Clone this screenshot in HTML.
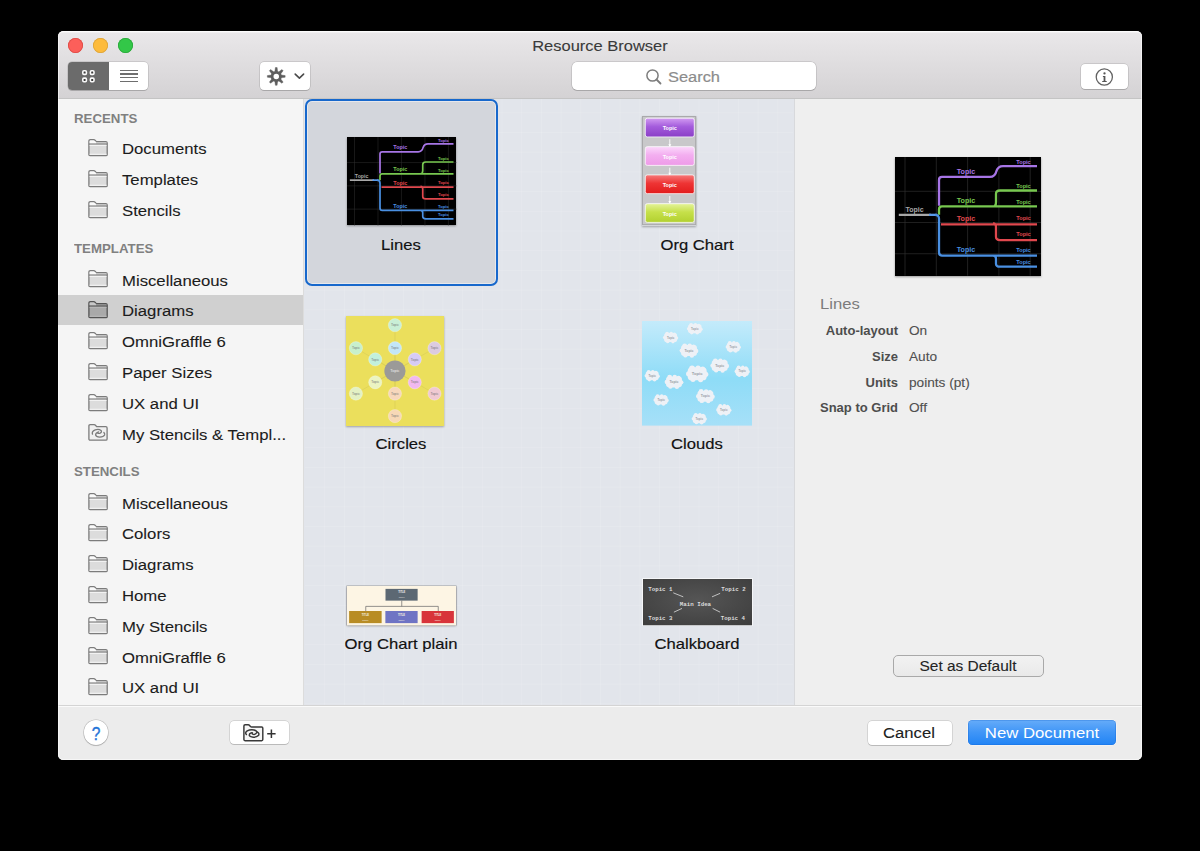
<!DOCTYPE html>
<html><head><meta charset="utf-8"><style>
html,body{margin:0;padding:0;width:1200px;height:851px;background:#000;overflow:hidden;font-family:"Liberation Sans",sans-serif;}
.a{position:absolute;}
.t{position:absolute;line-height:1;white-space:nowrap;}
#win{position:absolute;left:58px;top:31px;width:1084px;height:729px;border-radius:5.5px;overflow:hidden;background:#ececec;}
#bar{position:absolute;left:0;top:0;width:1084px;height:68px;background:linear-gradient(#eae8ea,#d4d2d4);border-bottom:1px solid #c4c4c4;box-sizing:border-box;box-shadow:inset 0 1.5px 0 rgba(255,255,255,0.7);}
#side{position:absolute;left:0;top:68px;width:246px;height:606px;background:#f5f5f5;border-right:1px solid #dcdcdc;box-sizing:border-box;}
#grid{position:absolute;left:246px;top:68px;width:490px;height:606px;background:#e2e5eb;}
#info{position:absolute;left:735.5px;top:68px;width:348.5px;height:606px;background:#efefef;border-left:1.5px solid #d8d9dc;box-sizing:border-box;}
#foot{position:absolute;left:0;top:674px;width:1084px;height:55px;background:#ececec;border-top:1px solid #d4d4d4;box-sizing:border-box;box-shadow:inset 0 1px 0 rgba(255,255,255,0.75);}
.btn{position:absolute;background:#fff;border-radius:4px;box-sizing:border-box;box-shadow:0 0 0 0.5px rgba(0,0,0,0.2),0 1px 0.5px rgba(0,0,0,0.12);}
svg{position:absolute;overflow:visible;}
</style></head><body>
<div id="win"><div id="bar"></div><div id="side"></div><div id="grid"></div><div id="info"></div><div id="foot"></div><div class="a" style="left:0;top:0;width:1084px;height:729px;box-sizing:border-box;border:1px solid rgba(255,255,255,0.55);border-radius:5.5px;"></div></div>
<div class="a" style="left:68.30px;top:37.5px;width:15px;height:15px;border-radius:50%;background:#fc5f5a;box-shadow:inset 0 0 0 0.8px #dc4a45;"></div>
<div class="a" style="left:93.00px;top:37.5px;width:15px;height:15px;border-radius:50%;background:#fdbb3c;box-shadow:inset 0 0 0 0.8px #dba33a;"></div>
<div class="a" style="left:117.60px;top:37.5px;width:15px;height:15px;border-radius:50%;background:#33c748;box-shadow:inset 0 0 0 0.8px #2aa83a;"></div>
<div class="t" style="left:450.00px;width:300px;text-align:center;top:38.00px;font-size:16px;color:#3a3a3a;transform:scale(1.03,0.92);transform-origin:50% 13.60px;-webkit-text-stroke:0.1px currentColor;">Resource Browser</div>
<div class="btn" style="left:68px;top:62px;width:80px;height:28px;"></div>
<div class="a" style="left:68px;top:62px;width:41px;height:28px;background:#6b6b6b;border-radius:4px 0 0 4px;"></div>
<svg style="left:0;top:0" width="1200" height="851"><rect x="82.80" y="70.80" width="3.6" height="3.6" rx="1.1" fill="#3a3a3a" stroke="#fafafa" stroke-width="1.6"/><rect x="82.80" y="78.10" width="3.6" height="3.6" rx="1.1" fill="#3a3a3a" stroke="#fafafa" stroke-width="1.6"/><rect x="90.40" y="70.80" width="3.6" height="3.6" rx="1.1" fill="#3a3a3a" stroke="#fafafa" stroke-width="1.6"/><rect x="90.40" y="78.10" width="3.6" height="3.6" rx="1.1" fill="#3a3a3a" stroke="#fafafa" stroke-width="1.6"/></svg>
<div class="a" style="left:120.1px;top:69.65px;width:17.6px;height:1.3px;background:#6e6e6e;"></div>
<div class="a" style="left:120.1px;top:73.40px;width:17.6px;height:1.3px;background:#6e6e6e;"></div>
<div class="a" style="left:120.1px;top:77.15px;width:17.6px;height:1.3px;background:#6e6e6e;"></div>
<div class="a" style="left:120.1px;top:80.90px;width:17.6px;height:1.3px;background:#6e6e6e;"></div>
<div class="btn" style="left:260px;top:62px;width:50px;height:28px;"></div>
<svg style="left:0;top:0" width="1200" height="851"><path d="M280.85 77.85 L285.15 77.25 L285.15 75.55 L280.85 74.95 Z" fill="#5e5e5e" stroke="#5e5e5e" stroke-width="0.4" stroke-linejoin="round"/><path d="M278.48 80.68 L281.94 83.29 L283.14 82.09 L280.53 78.63 Z" fill="#5e5e5e" stroke="#5e5e5e" stroke-width="0.4" stroke-linejoin="round"/><path d="M274.80 81.00 L275.40 85.30 L277.10 85.30 L277.70 81.00 Z" fill="#5e5e5e" stroke="#5e5e5e" stroke-width="0.4" stroke-linejoin="round"/><path d="M271.97 78.63 L269.36 82.09 L270.56 83.29 L274.02 80.68 Z" fill="#5e5e5e" stroke="#5e5e5e" stroke-width="0.4" stroke-linejoin="round"/><path d="M271.65 74.95 L267.35 75.55 L267.35 77.25 L271.65 77.85 Z" fill="#5e5e5e" stroke="#5e5e5e" stroke-width="0.4" stroke-linejoin="round"/><path d="M274.02 72.12 L270.56 69.51 L269.36 70.71 L271.97 74.17 Z" fill="#5e5e5e" stroke="#5e5e5e" stroke-width="0.4" stroke-linejoin="round"/><path d="M277.70 71.80 L277.10 67.50 L275.40 67.50 L274.80 71.80 Z" fill="#5e5e5e" stroke="#5e5e5e" stroke-width="0.4" stroke-linejoin="round"/><path d="M280.53 74.17 L283.14 70.71 L281.94 69.51 L278.48 72.12 Z" fill="#5e5e5e" stroke="#5e5e5e" stroke-width="0.4" stroke-linejoin="round"/><circle cx="276.25" cy="76.4" r="4.1" fill="none" stroke="#5e5e5e" stroke-width="2.7"/><path d="M295.2 74.1 L299.4 78.1 L303.6 74.1" fill="none" stroke="#4a4a4a" stroke-width="1.6" stroke-linecap="round" stroke-linejoin="round"/></svg>
<div class="btn" style="left:572px;top:62px;width:244px;height:28px;border-radius:5px;"></div>
<svg style="left:0;top:0" width="1200" height="851"><circle cx="652.5" cy="75.5" r="5.6" fill="none" stroke="#7d7d7d" stroke-width="1.5"/><line x1="656.5" y1="79.5" x2="660.5" y2="83.5" stroke="#7d7d7d" stroke-width="1.8" stroke-linecap="round"/></svg>
<div class="t" style="left:667.50px;top:68.60px;font-size:16px;color:#8c8c8c;transform:scale(1.025,0.96);transform-origin:0 13.60px;-webkit-text-stroke:0.2px currentColor;">Search</div>
<div class="btn" style="left:1081px;top:64px;width:47px;height:25px;"></div>
<svg style="left:0;top:0" width="1200" height="851"><circle cx="1104.3" cy="77" r="8.1" fill="none" stroke="#606060" stroke-width="1.25"/><circle cx="1104.5" cy="73.4" r="1.15" fill="#555"/><path d="M1102.9 76.1 H1105.4 V81.0 H1106.7 V82.0 H1102.2 V81.0 H1103.6 V77.0 H1102.9 Z" fill="#555"/></svg>
<div class="a" style="left:58px;top:294.5px;width:245px;height:30.5px;background:#d0d0d0;"></div>
<div class="t" style="left:74.00px;top:111.55px;font-size:13px;color:#808080;font-weight:bold;transform:scale(1.02,1.0);transform-origin:0 11.05px;">RECENTS</div>
<div class="t" style="left:74.00px;top:242.25px;font-size:13px;color:#808080;font-weight:bold;transform:scale(1.02,1.0);transform-origin:0 11.05px;">TEMPLATES</div>
<div class="t" style="left:74.00px;top:465.45px;font-size:13px;color:#808080;font-weight:bold;transform:scale(1.02,1.0);transform-origin:0 11.05px;">STENCILS</div>
<svg style="left:88px;top:139.10px" width="20" height="17" viewBox="0 0 20 17"><path d="M0.9 15.4 V2.2 Q0.9 0.7 2.4 0.7 H5.6 Q6.6 0.7 7.3 1.5 L7.8 2.1 Q8.2 2.6 9.0 2.6 H17.8 Q19.2 2.6 19.2 4.0 V15.4 Q19.2 16.6 18.0 16.6 H2.1 Q0.9 16.6 0.9 15.4 Z" fill="#dcdcdc" stroke="#7c7c7c" stroke-width="1.3"/><path d="M1.6 2.3 Q1.8 1.4 2.6 1.4 H5.5 Q6.3 1.4 6.9 2.1 L8.1 3.3 V4.5 H1.6 Z" fill="#fafafa"/><rect x="8.1" y="3.3" width="10.4" height="1.3" fill="#c6c6c6"/><line x1="0.9" y1="5.1" x2="19.2" y2="5.1" stroke="#7c7c7c" stroke-width="1.2"/><rect x="1.6" y="5.8" width="16.9" height="1.2" fill="#f2f2f2"/><rect x="1.6" y="14.7" width="16.9" height="1.2" fill="#f2f2f2"/></svg>
<div class="t" style="left:122.20px;top:141.30px;font-size:16px;color:#1c1c1c;transform:scale(1.045,0.9);transform-origin:0 13.60px;-webkit-text-stroke:0.1px currentColor;">Documents</div>
<svg style="left:88px;top:169.90px" width="20" height="17" viewBox="0 0 20 17"><path d="M0.9 15.4 V2.2 Q0.9 0.7 2.4 0.7 H5.6 Q6.6 0.7 7.3 1.5 L7.8 2.1 Q8.2 2.6 9.0 2.6 H17.8 Q19.2 2.6 19.2 4.0 V15.4 Q19.2 16.6 18.0 16.6 H2.1 Q0.9 16.6 0.9 15.4 Z" fill="#dcdcdc" stroke="#7c7c7c" stroke-width="1.3"/><path d="M1.6 2.3 Q1.8 1.4 2.6 1.4 H5.5 Q6.3 1.4 6.9 2.1 L8.1 3.3 V4.5 H1.6 Z" fill="#fafafa"/><rect x="8.1" y="3.3" width="10.4" height="1.3" fill="#c6c6c6"/><line x1="0.9" y1="5.1" x2="19.2" y2="5.1" stroke="#7c7c7c" stroke-width="1.2"/><rect x="1.6" y="5.8" width="16.9" height="1.2" fill="#f2f2f2"/><rect x="1.6" y="14.7" width="16.9" height="1.2" fill="#f2f2f2"/></svg>
<div class="t" style="left:122.20px;top:172.10px;font-size:16px;color:#1c1c1c;transform:scale(1.045,0.9);transform-origin:0 13.60px;-webkit-text-stroke:0.1px currentColor;">Templates</div>
<svg style="left:88px;top:200.70px" width="20" height="17" viewBox="0 0 20 17"><path d="M0.9 15.4 V2.2 Q0.9 0.7 2.4 0.7 H5.6 Q6.6 0.7 7.3 1.5 L7.8 2.1 Q8.2 2.6 9.0 2.6 H17.8 Q19.2 2.6 19.2 4.0 V15.4 Q19.2 16.6 18.0 16.6 H2.1 Q0.9 16.6 0.9 15.4 Z" fill="#dcdcdc" stroke="#7c7c7c" stroke-width="1.3"/><path d="M1.6 2.3 Q1.8 1.4 2.6 1.4 H5.5 Q6.3 1.4 6.9 2.1 L8.1 3.3 V4.5 H1.6 Z" fill="#fafafa"/><rect x="8.1" y="3.3" width="10.4" height="1.3" fill="#c6c6c6"/><line x1="0.9" y1="5.1" x2="19.2" y2="5.1" stroke="#7c7c7c" stroke-width="1.2"/><rect x="1.6" y="5.8" width="16.9" height="1.2" fill="#f2f2f2"/><rect x="1.6" y="14.7" width="16.9" height="1.2" fill="#f2f2f2"/></svg>
<div class="t" style="left:122.20px;top:202.90px;font-size:16px;color:#1c1c1c;transform:scale(1.045,0.9);transform-origin:0 13.60px;-webkit-text-stroke:0.1px currentColor;">Stencils</div>
<svg style="left:88px;top:270.30px" width="20" height="17" viewBox="0 0 20 17"><path d="M0.9 15.4 V2.2 Q0.9 0.7 2.4 0.7 H5.6 Q6.6 0.7 7.3 1.5 L7.8 2.1 Q8.2 2.6 9.0 2.6 H17.8 Q19.2 2.6 19.2 4.0 V15.4 Q19.2 16.6 18.0 16.6 H2.1 Q0.9 16.6 0.9 15.4 Z" fill="#dcdcdc" stroke="#7c7c7c" stroke-width="1.3"/><path d="M1.6 2.3 Q1.8 1.4 2.6 1.4 H5.5 Q6.3 1.4 6.9 2.1 L8.1 3.3 V4.5 H1.6 Z" fill="#fafafa"/><rect x="8.1" y="3.3" width="10.4" height="1.3" fill="#c6c6c6"/><line x1="0.9" y1="5.1" x2="19.2" y2="5.1" stroke="#7c7c7c" stroke-width="1.2"/><rect x="1.6" y="5.8" width="16.9" height="1.2" fill="#f2f2f2"/><rect x="1.6" y="14.7" width="16.9" height="1.2" fill="#f2f2f2"/></svg>
<div class="t" style="left:122.20px;top:272.50px;font-size:16px;color:#1c1c1c;transform:scale(1.045,0.9);transform-origin:0 13.60px;-webkit-text-stroke:0.1px currentColor;">Miscellaneous</div>
<svg style="left:88px;top:301.10px" width="20" height="17" viewBox="0 0 20 17"><path d="M0.9 15.4 V2.2 Q0.9 0.7 2.4 0.7 H5.6 Q6.6 0.7 7.3 1.5 L7.8 2.1 Q8.2 2.6 9.0 2.6 H17.8 Q19.2 2.6 19.2 4.0 V15.4 Q19.2 16.6 18.0 16.6 H2.1 Q0.9 16.6 0.9 15.4 Z" fill="#a9a9a9" stroke="#555555" stroke-width="1.3"/><path d="M1.6 2.3 Q1.8 1.4 2.6 1.4 H5.5 Q6.3 1.4 6.9 2.1 L8.1 3.3 V4.5 H1.6 Z" fill="#c8c8c8"/><rect x="8.1" y="3.3" width="10.4" height="1.3" fill="#8e8e8e"/><line x1="0.9" y1="5.1" x2="19.2" y2="5.1" stroke="#555555" stroke-width="1.2"/><rect x="1.6" y="5.8" width="16.9" height="1.2" fill="#b6b6b6"/><rect x="1.6" y="14.7" width="16.9" height="1.2" fill="#b6b6b6"/></svg>
<div class="t" style="left:122.20px;top:303.30px;font-size:16px;color:#1c1c1c;transform:scale(1.045,0.9);transform-origin:0 13.60px;-webkit-text-stroke:0.1px currentColor;">Diagrams</div>
<svg style="left:88px;top:331.90px" width="20" height="17" viewBox="0 0 20 17"><path d="M0.9 15.4 V2.2 Q0.9 0.7 2.4 0.7 H5.6 Q6.6 0.7 7.3 1.5 L7.8 2.1 Q8.2 2.6 9.0 2.6 H17.8 Q19.2 2.6 19.2 4.0 V15.4 Q19.2 16.6 18.0 16.6 H2.1 Q0.9 16.6 0.9 15.4 Z" fill="#dcdcdc" stroke="#7c7c7c" stroke-width="1.3"/><path d="M1.6 2.3 Q1.8 1.4 2.6 1.4 H5.5 Q6.3 1.4 6.9 2.1 L8.1 3.3 V4.5 H1.6 Z" fill="#fafafa"/><rect x="8.1" y="3.3" width="10.4" height="1.3" fill="#c6c6c6"/><line x1="0.9" y1="5.1" x2="19.2" y2="5.1" stroke="#7c7c7c" stroke-width="1.2"/><rect x="1.6" y="5.8" width="16.9" height="1.2" fill="#f2f2f2"/><rect x="1.6" y="14.7" width="16.9" height="1.2" fill="#f2f2f2"/></svg>
<div class="t" style="left:122.20px;top:334.10px;font-size:16px;color:#1c1c1c;transform:scale(1.045,0.9);transform-origin:0 13.60px;-webkit-text-stroke:0.1px currentColor;">OmniGraffle 6</div>
<svg style="left:88px;top:362.70px" width="20" height="17" viewBox="0 0 20 17"><path d="M0.9 15.4 V2.2 Q0.9 0.7 2.4 0.7 H5.6 Q6.6 0.7 7.3 1.5 L7.8 2.1 Q8.2 2.6 9.0 2.6 H17.8 Q19.2 2.6 19.2 4.0 V15.4 Q19.2 16.6 18.0 16.6 H2.1 Q0.9 16.6 0.9 15.4 Z" fill="#dcdcdc" stroke="#7c7c7c" stroke-width="1.3"/><path d="M1.6 2.3 Q1.8 1.4 2.6 1.4 H5.5 Q6.3 1.4 6.9 2.1 L8.1 3.3 V4.5 H1.6 Z" fill="#fafafa"/><rect x="8.1" y="3.3" width="10.4" height="1.3" fill="#c6c6c6"/><line x1="0.9" y1="5.1" x2="19.2" y2="5.1" stroke="#7c7c7c" stroke-width="1.2"/><rect x="1.6" y="5.8" width="16.9" height="1.2" fill="#f2f2f2"/><rect x="1.6" y="14.7" width="16.9" height="1.2" fill="#f2f2f2"/></svg>
<div class="t" style="left:122.20px;top:364.90px;font-size:16px;color:#1c1c1c;transform:scale(1.045,0.9);transform-origin:0 13.60px;-webkit-text-stroke:0.1px currentColor;">Paper Sizes</div>
<svg style="left:88px;top:393.50px" width="20" height="17" viewBox="0 0 20 17"><path d="M0.9 15.4 V2.2 Q0.9 0.7 2.4 0.7 H5.6 Q6.6 0.7 7.3 1.5 L7.8 2.1 Q8.2 2.6 9.0 2.6 H17.8 Q19.2 2.6 19.2 4.0 V15.4 Q19.2 16.6 18.0 16.6 H2.1 Q0.9 16.6 0.9 15.4 Z" fill="#dcdcdc" stroke="#7c7c7c" stroke-width="1.3"/><path d="M1.6 2.3 Q1.8 1.4 2.6 1.4 H5.5 Q6.3 1.4 6.9 2.1 L8.1 3.3 V4.5 H1.6 Z" fill="#fafafa"/><rect x="8.1" y="3.3" width="10.4" height="1.3" fill="#c6c6c6"/><line x1="0.9" y1="5.1" x2="19.2" y2="5.1" stroke="#7c7c7c" stroke-width="1.2"/><rect x="1.6" y="5.8" width="16.9" height="1.2" fill="#f2f2f2"/><rect x="1.6" y="14.7" width="16.9" height="1.2" fill="#f2f2f2"/></svg>
<div class="t" style="left:122.20px;top:395.70px;font-size:16px;color:#1c1c1c;transform:scale(1.045,0.9);transform-origin:0 13.60px;-webkit-text-stroke:0.1px currentColor;">UX and UI</div>
<svg style="left:88px;top:424.30px" width="20" height="17" viewBox="0 0 20 17"><path d="M0.9 14.9 V2.0 Q0.9 0.7 2.2 0.7 H6.0 Q7.0 0.7 7.7 1.5 L8.2 2.1 Q8.6 2.7 9.4 2.7 H17.8 Q19.1 2.7 19.1 4.0 V14.9 Q19.1 16.2 17.8 16.2 H2.2 Q0.9 16.2 0.9 14.9 Z" fill="#f0f0f0" stroke="#7c7c7c" stroke-width="1.3"/><path d="M4.5 10.2 Q3.4 7.4 7.2 5.8 Q10.8 4.6 13.0 6.4 Q14.2 8.2 12.2 9.1 Q10.6 9.6 9.5 8.9" fill="none" stroke="#7c7c7c" stroke-width="1.3" stroke-linecap="round"/><path d="M10.6 7.8 Q7.6 8.8 7.6 11.0 Q8.2 13.0 11.6 13.1 Q15.6 13.0 16.6 11.0 Q17.0 9.6 15.9 8.5" fill="none" stroke="#7c7c7c" stroke-width="1.3" stroke-linecap="round"/></svg>
<div class="t" style="left:122.20px;top:426.50px;font-size:16px;color:#1c1c1c;transform:scale(1.045,0.9);transform-origin:0 13.60px;-webkit-text-stroke:0.1px currentColor;">My Stencils &amp; Templ...</div>
<svg style="left:88px;top:493.30px" width="20" height="17" viewBox="0 0 20 17"><path d="M0.9 15.4 V2.2 Q0.9 0.7 2.4 0.7 H5.6 Q6.6 0.7 7.3 1.5 L7.8 2.1 Q8.2 2.6 9.0 2.6 H17.8 Q19.2 2.6 19.2 4.0 V15.4 Q19.2 16.6 18.0 16.6 H2.1 Q0.9 16.6 0.9 15.4 Z" fill="#dcdcdc" stroke="#7c7c7c" stroke-width="1.3"/><path d="M1.6 2.3 Q1.8 1.4 2.6 1.4 H5.5 Q6.3 1.4 6.9 2.1 L8.1 3.3 V4.5 H1.6 Z" fill="#fafafa"/><rect x="8.1" y="3.3" width="10.4" height="1.3" fill="#c6c6c6"/><line x1="0.9" y1="5.1" x2="19.2" y2="5.1" stroke="#7c7c7c" stroke-width="1.2"/><rect x="1.6" y="5.8" width="16.9" height="1.2" fill="#f2f2f2"/><rect x="1.6" y="14.7" width="16.9" height="1.2" fill="#f2f2f2"/></svg>
<div class="t" style="left:122.20px;top:495.50px;font-size:16px;color:#1c1c1c;transform:scale(1.045,0.9);transform-origin:0 13.60px;-webkit-text-stroke:0.1px currentColor;">Miscellaneous</div>
<svg style="left:88px;top:524.10px" width="20" height="17" viewBox="0 0 20 17"><path d="M0.9 15.4 V2.2 Q0.9 0.7 2.4 0.7 H5.6 Q6.6 0.7 7.3 1.5 L7.8 2.1 Q8.2 2.6 9.0 2.6 H17.8 Q19.2 2.6 19.2 4.0 V15.4 Q19.2 16.6 18.0 16.6 H2.1 Q0.9 16.6 0.9 15.4 Z" fill="#dcdcdc" stroke="#7c7c7c" stroke-width="1.3"/><path d="M1.6 2.3 Q1.8 1.4 2.6 1.4 H5.5 Q6.3 1.4 6.9 2.1 L8.1 3.3 V4.5 H1.6 Z" fill="#fafafa"/><rect x="8.1" y="3.3" width="10.4" height="1.3" fill="#c6c6c6"/><line x1="0.9" y1="5.1" x2="19.2" y2="5.1" stroke="#7c7c7c" stroke-width="1.2"/><rect x="1.6" y="5.8" width="16.9" height="1.2" fill="#f2f2f2"/><rect x="1.6" y="14.7" width="16.9" height="1.2" fill="#f2f2f2"/></svg>
<div class="t" style="left:122.20px;top:526.30px;font-size:16px;color:#1c1c1c;transform:scale(1.045,0.9);transform-origin:0 13.60px;-webkit-text-stroke:0.1px currentColor;">Colors</div>
<svg style="left:88px;top:554.90px" width="20" height="17" viewBox="0 0 20 17"><path d="M0.9 15.4 V2.2 Q0.9 0.7 2.4 0.7 H5.6 Q6.6 0.7 7.3 1.5 L7.8 2.1 Q8.2 2.6 9.0 2.6 H17.8 Q19.2 2.6 19.2 4.0 V15.4 Q19.2 16.6 18.0 16.6 H2.1 Q0.9 16.6 0.9 15.4 Z" fill="#dcdcdc" stroke="#7c7c7c" stroke-width="1.3"/><path d="M1.6 2.3 Q1.8 1.4 2.6 1.4 H5.5 Q6.3 1.4 6.9 2.1 L8.1 3.3 V4.5 H1.6 Z" fill="#fafafa"/><rect x="8.1" y="3.3" width="10.4" height="1.3" fill="#c6c6c6"/><line x1="0.9" y1="5.1" x2="19.2" y2="5.1" stroke="#7c7c7c" stroke-width="1.2"/><rect x="1.6" y="5.8" width="16.9" height="1.2" fill="#f2f2f2"/><rect x="1.6" y="14.7" width="16.9" height="1.2" fill="#f2f2f2"/></svg>
<div class="t" style="left:122.20px;top:557.10px;font-size:16px;color:#1c1c1c;transform:scale(1.045,0.9);transform-origin:0 13.60px;-webkit-text-stroke:0.1px currentColor;">Diagrams</div>
<svg style="left:88px;top:585.70px" width="20" height="17" viewBox="0 0 20 17"><path d="M0.9 15.4 V2.2 Q0.9 0.7 2.4 0.7 H5.6 Q6.6 0.7 7.3 1.5 L7.8 2.1 Q8.2 2.6 9.0 2.6 H17.8 Q19.2 2.6 19.2 4.0 V15.4 Q19.2 16.6 18.0 16.6 H2.1 Q0.9 16.6 0.9 15.4 Z" fill="#dcdcdc" stroke="#7c7c7c" stroke-width="1.3"/><path d="M1.6 2.3 Q1.8 1.4 2.6 1.4 H5.5 Q6.3 1.4 6.9 2.1 L8.1 3.3 V4.5 H1.6 Z" fill="#fafafa"/><rect x="8.1" y="3.3" width="10.4" height="1.3" fill="#c6c6c6"/><line x1="0.9" y1="5.1" x2="19.2" y2="5.1" stroke="#7c7c7c" stroke-width="1.2"/><rect x="1.6" y="5.8" width="16.9" height="1.2" fill="#f2f2f2"/><rect x="1.6" y="14.7" width="16.9" height="1.2" fill="#f2f2f2"/></svg>
<div class="t" style="left:122.20px;top:587.90px;font-size:16px;color:#1c1c1c;transform:scale(1.045,0.9);transform-origin:0 13.60px;-webkit-text-stroke:0.1px currentColor;">Home</div>
<svg style="left:88px;top:616.50px" width="20" height="17" viewBox="0 0 20 17"><path d="M0.9 15.4 V2.2 Q0.9 0.7 2.4 0.7 H5.6 Q6.6 0.7 7.3 1.5 L7.8 2.1 Q8.2 2.6 9.0 2.6 H17.8 Q19.2 2.6 19.2 4.0 V15.4 Q19.2 16.6 18.0 16.6 H2.1 Q0.9 16.6 0.9 15.4 Z" fill="#dcdcdc" stroke="#7c7c7c" stroke-width="1.3"/><path d="M1.6 2.3 Q1.8 1.4 2.6 1.4 H5.5 Q6.3 1.4 6.9 2.1 L8.1 3.3 V4.5 H1.6 Z" fill="#fafafa"/><rect x="8.1" y="3.3" width="10.4" height="1.3" fill="#c6c6c6"/><line x1="0.9" y1="5.1" x2="19.2" y2="5.1" stroke="#7c7c7c" stroke-width="1.2"/><rect x="1.6" y="5.8" width="16.9" height="1.2" fill="#f2f2f2"/><rect x="1.6" y="14.7" width="16.9" height="1.2" fill="#f2f2f2"/></svg>
<div class="t" style="left:122.20px;top:618.70px;font-size:16px;color:#1c1c1c;transform:scale(1.045,0.9);transform-origin:0 13.60px;-webkit-text-stroke:0.1px currentColor;">My Stencils</div>
<svg style="left:88px;top:647.30px" width="20" height="17" viewBox="0 0 20 17"><path d="M0.9 15.4 V2.2 Q0.9 0.7 2.4 0.7 H5.6 Q6.6 0.7 7.3 1.5 L7.8 2.1 Q8.2 2.6 9.0 2.6 H17.8 Q19.2 2.6 19.2 4.0 V15.4 Q19.2 16.6 18.0 16.6 H2.1 Q0.9 16.6 0.9 15.4 Z" fill="#dcdcdc" stroke="#7c7c7c" stroke-width="1.3"/><path d="M1.6 2.3 Q1.8 1.4 2.6 1.4 H5.5 Q6.3 1.4 6.9 2.1 L8.1 3.3 V4.5 H1.6 Z" fill="#fafafa"/><rect x="8.1" y="3.3" width="10.4" height="1.3" fill="#c6c6c6"/><line x1="0.9" y1="5.1" x2="19.2" y2="5.1" stroke="#7c7c7c" stroke-width="1.2"/><rect x="1.6" y="5.8" width="16.9" height="1.2" fill="#f2f2f2"/><rect x="1.6" y="14.7" width="16.9" height="1.2" fill="#f2f2f2"/></svg>
<div class="t" style="left:122.20px;top:649.50px;font-size:16px;color:#1c1c1c;transform:scale(1.045,0.9);transform-origin:0 13.60px;-webkit-text-stroke:0.1px currentColor;">OmniGraffle 6</div>
<svg style="left:88px;top:678.10px" width="20" height="17" viewBox="0 0 20 17"><path d="M0.9 15.4 V2.2 Q0.9 0.7 2.4 0.7 H5.6 Q6.6 0.7 7.3 1.5 L7.8 2.1 Q8.2 2.6 9.0 2.6 H17.8 Q19.2 2.6 19.2 4.0 V15.4 Q19.2 16.6 18.0 16.6 H2.1 Q0.9 16.6 0.9 15.4 Z" fill="#dcdcdc" stroke="#7c7c7c" stroke-width="1.3"/><path d="M1.6 2.3 Q1.8 1.4 2.6 1.4 H5.5 Q6.3 1.4 6.9 2.1 L8.1 3.3 V4.5 H1.6 Z" fill="#fafafa"/><rect x="8.1" y="3.3" width="10.4" height="1.3" fill="#c6c6c6"/><line x1="0.9" y1="5.1" x2="19.2" y2="5.1" stroke="#7c7c7c" stroke-width="1.2"/><rect x="1.6" y="5.8" width="16.9" height="1.2" fill="#f2f2f2"/><rect x="1.6" y="14.7" width="16.9" height="1.2" fill="#f2f2f2"/></svg>
<div class="t" style="left:122.20px;top:680.30px;font-size:16px;color:#1c1c1c;transform:scale(1.045,0.9);transform-origin:0 13.60px;-webkit-text-stroke:0.1px currentColor;">UX and UI</div>
<svg style="left:0;top:0" width="1200" height="851"><g stroke="#ffffff" stroke-opacity="0.13" stroke-width="1"><line x1="324.7" y1="99" x2="324.7" y2="705" /><line x1="344.4" y1="99" x2="344.4" y2="705" /><line x1="364.1" y1="99" x2="364.1" y2="705" /><line x1="383.8" y1="99" x2="383.8" y2="705" /><line x1="403.5" y1="99" x2="403.5" y2="705" /><line x1="423.2" y1="99" x2="423.2" y2="705" /><line x1="442.9" y1="99" x2="442.9" y2="705" /><line x1="462.6" y1="99" x2="462.6" y2="705" /><line x1="482.3" y1="99" x2="482.3" y2="705" /><line x1="502.0" y1="99" x2="502.0" y2="705" /><line x1="521.7" y1="99" x2="521.7" y2="705" /><line x1="541.4" y1="99" x2="541.4" y2="705" /><line x1="561.1" y1="99" x2="561.1" y2="705" /><line x1="580.8" y1="99" x2="580.8" y2="705" /><line x1="600.5" y1="99" x2="600.5" y2="705" /><line x1="620.2" y1="99" x2="620.2" y2="705" /><line x1="639.9" y1="99" x2="639.9" y2="705" /><line x1="659.6" y1="99" x2="659.6" y2="705" /><line x1="679.3" y1="99" x2="679.3" y2="705" /><line x1="699.0" y1="99" x2="699.0" y2="705" /><line x1="718.7" y1="99" x2="718.7" y2="705" /><line x1="738.4" y1="99" x2="738.4" y2="705" /><line x1="758.1" y1="99" x2="758.1" y2="705" /><line x1="777.8" y1="99" x2="777.8" y2="705" /><line x1="305" y1="112.8" x2="793" y2="112.8" /><line x1="305" y1="132.5" x2="793" y2="132.5" /><line x1="305" y1="152.2" x2="793" y2="152.2" /><line x1="305" y1="171.9" x2="793" y2="171.9" /><line x1="305" y1="191.6" x2="793" y2="191.6" /><line x1="305" y1="211.3" x2="793" y2="211.3" /><line x1="305" y1="231.0" x2="793" y2="231.0" /><line x1="305" y1="250.7" x2="793" y2="250.7" /><line x1="305" y1="270.4" x2="793" y2="270.4" /><line x1="305" y1="290.1" x2="793" y2="290.1" /><line x1="305" y1="309.8" x2="793" y2="309.8" /><line x1="305" y1="329.5" x2="793" y2="329.5" /><line x1="305" y1="349.2" x2="793" y2="349.2" /><line x1="305" y1="368.9" x2="793" y2="368.9" /><line x1="305" y1="388.6" x2="793" y2="388.6" /><line x1="305" y1="408.3" x2="793" y2="408.3" /><line x1="305" y1="428.0" x2="793" y2="428.0" /><line x1="305" y1="447.7" x2="793" y2="447.7" /><line x1="305" y1="467.4" x2="793" y2="467.4" /><line x1="305" y1="487.1" x2="793" y2="487.1" /><line x1="305" y1="506.8" x2="793" y2="506.8" /><line x1="305" y1="526.5" x2="793" y2="526.5" /><line x1="305" y1="546.2" x2="793" y2="546.2" /><line x1="305" y1="565.9" x2="793" y2="565.9" /><line x1="305" y1="585.6" x2="793" y2="585.6" /><line x1="305" y1="605.3" x2="793" y2="605.3" /><line x1="305" y1="625.0" x2="793" y2="625.0" /><line x1="305" y1="644.7" x2="793" y2="644.7" /><line x1="305" y1="664.4" x2="793" y2="664.4" /><line x1="305" y1="684.1" x2="793" y2="684.1" /><line x1="305" y1="703.8" x2="793" y2="703.8" /></g></svg>
<div class="a" style="left:305px;top:99px;width:192.5px;height:187px;box-sizing:border-box;border:2.5px solid #1768cc;border-radius:7px;background:#d3d6dc;box-shadow:inset 0 0 0 1px rgba(255,255,255,0.45);"></div>
<svg style="left:346.5px;top:136.6px;box-shadow:0 0.5px 2px rgba(0,0,0,0.35);background:#000" width="109.5" height="88.5" viewBox="0 0 146 119" preserveAspectRatio="none"><line x1="10" y1="0" x2="10" y2="119" stroke="#2e2e2e" stroke-width="0.7"/><line x1="41.3" y1="0" x2="41.3" y2="119" stroke="#2e2e2e" stroke-width="0.7"/><line x1="72.6" y1="0" x2="72.6" y2="119" stroke="#2e2e2e" stroke-width="0.7"/><line x1="103.9" y1="0" x2="103.9" y2="119" stroke="#2e2e2e" stroke-width="0.7"/><line x1="135.2" y1="0" x2="135.2" y2="119" stroke="#2e2e2e" stroke-width="0.7"/><line x1="0" y1="34.4" x2="146" y2="34.4" stroke="#2e2e2e" stroke-width="0.7"/><line x1="0" y1="65.7" x2="146" y2="65.7" stroke="#2e2e2e" stroke-width="0.7"/><line x1="0" y1="97.0" x2="146" y2="97.0" stroke="#2e2e2e" stroke-width="0.7"/><line x1="3.8" y1="58" x2="36" y2="58" stroke="#a8a8a8" stroke-width="2.3"/><line x1="34" y1="58" x2="42" y2="58" stroke="#5a9ae8" stroke-width="2.3"/><path d="M44 49 V23 Q44 20 47 20 H95 Q100 20 101.5 14 Q103 9.2 108 9.2 H142" fill="none" stroke="#a775e6" stroke-width="2.3"/><path d="M44 58 V52.6 Q44 49.6 47 49.6 H142 M98 49.6 Q101 49.6 101 45 V37 Q101 33.6 105 33.6 H142" fill="none" stroke="#78c850" stroke-width="2.3"/><path d="M46 67.5 H142 M98 66.5 Q101 66.5 101 70 V80 Q101 83.3 105 83.3 H142" fill="none" stroke="#e0484e" stroke-width="2.3"/><path d="M40 58 Q44 58 44 62 V95.5 Q44 98.8 47 98.8 H142 M98 98.8 Q101 98.8 101 102 V107 Q101 110 105 110 H142" fill="none" stroke="#4a90e2" stroke-width="2.3"/><text x="19.5" y="55" fill="#a8a8a8" font-family="Liberation Sans" font-weight="bold" font-size="7" text-anchor="middle">Topic</text><text x="71" y="16.8" fill="#a775e6" font-family="Liberation Sans" font-weight="bold" font-size="7.2" text-anchor="middle">Topic</text><text x="71" y="45.8" fill="#78c850" font-family="Liberation Sans" font-weight="bold" font-size="7.2" text-anchor="middle">Topic</text><text x="71" y="64.5" fill="#e0484e" font-family="Liberation Sans" font-weight="bold" font-size="7.2" text-anchor="middle">Topic</text><text x="71" y="95.5" fill="#4a90e2" font-family="Liberation Sans" font-weight="bold" font-size="7.2" text-anchor="middle">Topic</text><text x="128.5" y="7.2" fill="#a775e6" font-family="Liberation Sans" font-weight="bold" font-size="5.6" text-anchor="middle">Topic</text><text x="128.5" y="30.8" fill="#78c850" font-family="Liberation Sans" font-weight="bold" font-size="5.6" text-anchor="middle">Topic</text><text x="128.5" y="46.8" fill="#78c850" font-family="Liberation Sans" font-weight="bold" font-size="5.6" text-anchor="middle">Topic</text><text x="128.5" y="63.2" fill="#e0484e" font-family="Liberation Sans" font-weight="bold" font-size="5.6" text-anchor="middle">Topic</text><text x="128.5" y="79" fill="#e0484e" font-family="Liberation Sans" font-weight="bold" font-size="5.6" text-anchor="middle">Topic</text><text x="128.5" y="95.6" fill="#4a90e2" font-family="Liberation Sans" font-weight="bold" font-size="5.6" text-anchor="middle">Topic</text><text x="128.5" y="106.8" fill="#4a90e2" font-family="Liberation Sans" font-weight="bold" font-size="5.6" text-anchor="middle">Topic</text></svg>
<svg style="left:895.3px;top:156.9px;box-shadow:0 0.5px 2px rgba(0,0,0,0.35);background:#000" width="146" height="118.7" viewBox="0 0 146 119" preserveAspectRatio="none"><line x1="10" y1="0" x2="10" y2="119" stroke="#2e2e2e" stroke-width="0.7"/><line x1="41.3" y1="0" x2="41.3" y2="119" stroke="#2e2e2e" stroke-width="0.7"/><line x1="72.6" y1="0" x2="72.6" y2="119" stroke="#2e2e2e" stroke-width="0.7"/><line x1="103.9" y1="0" x2="103.9" y2="119" stroke="#2e2e2e" stroke-width="0.7"/><line x1="135.2" y1="0" x2="135.2" y2="119" stroke="#2e2e2e" stroke-width="0.7"/><line x1="0" y1="34.4" x2="146" y2="34.4" stroke="#2e2e2e" stroke-width="0.7"/><line x1="0" y1="65.7" x2="146" y2="65.7" stroke="#2e2e2e" stroke-width="0.7"/><line x1="0" y1="97.0" x2="146" y2="97.0" stroke="#2e2e2e" stroke-width="0.7"/><line x1="3.8" y1="58" x2="36" y2="58" stroke="#a8a8a8" stroke-width="2.3"/><line x1="34" y1="58" x2="42" y2="58" stroke="#5a9ae8" stroke-width="2.3"/><path d="M44 49 V23 Q44 20 47 20 H95 Q100 20 101.5 14 Q103 9.2 108 9.2 H142" fill="none" stroke="#a775e6" stroke-width="2.3"/><path d="M44 58 V52.6 Q44 49.6 47 49.6 H142 M98 49.6 Q101 49.6 101 45 V37 Q101 33.6 105 33.6 H142" fill="none" stroke="#78c850" stroke-width="2.3"/><path d="M46 67.5 H142 M98 66.5 Q101 66.5 101 70 V80 Q101 83.3 105 83.3 H142" fill="none" stroke="#e0484e" stroke-width="2.3"/><path d="M40 58 Q44 58 44 62 V95.5 Q44 98.8 47 98.8 H142 M98 98.8 Q101 98.8 101 102 V107 Q101 110 105 110 H142" fill="none" stroke="#4a90e2" stroke-width="2.3"/><text x="19.5" y="55" fill="#a8a8a8" font-family="Liberation Sans" font-weight="bold" font-size="7" text-anchor="middle">Topic</text><text x="71" y="16.8" fill="#a775e6" font-family="Liberation Sans" font-weight="bold" font-size="7.2" text-anchor="middle">Topic</text><text x="71" y="45.8" fill="#78c850" font-family="Liberation Sans" font-weight="bold" font-size="7.2" text-anchor="middle">Topic</text><text x="71" y="64.5" fill="#e0484e" font-family="Liberation Sans" font-weight="bold" font-size="7.2" text-anchor="middle">Topic</text><text x="71" y="95.5" fill="#4a90e2" font-family="Liberation Sans" font-weight="bold" font-size="7.2" text-anchor="middle">Topic</text><text x="128.5" y="7.2" fill="#a775e6" font-family="Liberation Sans" font-weight="bold" font-size="5.6" text-anchor="middle">Topic</text><text x="128.5" y="30.8" fill="#78c850" font-family="Liberation Sans" font-weight="bold" font-size="5.6" text-anchor="middle">Topic</text><text x="128.5" y="46.8" fill="#78c850" font-family="Liberation Sans" font-weight="bold" font-size="5.6" text-anchor="middle">Topic</text><text x="128.5" y="63.2" fill="#e0484e" font-family="Liberation Sans" font-weight="bold" font-size="5.6" text-anchor="middle">Topic</text><text x="128.5" y="79" fill="#e0484e" font-family="Liberation Sans" font-weight="bold" font-size="5.6" text-anchor="middle">Topic</text><text x="128.5" y="95.6" fill="#4a90e2" font-family="Liberation Sans" font-weight="bold" font-size="5.6" text-anchor="middle">Topic</text><text x="128.5" y="106.8" fill="#4a90e2" font-family="Liberation Sans" font-weight="bold" font-size="5.6" text-anchor="middle">Topic</text></svg>
<svg style="left:642.2px;top:116.4px;box-shadow:0 0.5px 2px rgba(0,0,0,0.3)" width="54.2" height="109.2" viewBox="0 0 54 109" preserveAspectRatio="none"><defs><linearGradient id="gp" x1="0" y1="0" x2="0" y2="1"><stop offset="0" stop-color="#d29af2"/><stop offset="0.45" stop-color="#a45cdc"/><stop offset="1" stop-color="#8a3ec6"/></linearGradient><linearGradient id="gk" x1="0" y1="0" x2="0" y2="1"><stop offset="0" stop-color="#fbd8fb"/><stop offset="0.45" stop-color="#f3aef0"/><stop offset="1" stop-color="#ee9ae8"/></linearGradient><linearGradient id="gr" x1="0" y1="0" x2="0" y2="1"><stop offset="0" stop-color="#f67a7a"/><stop offset="0.45" stop-color="#ee3434"/><stop offset="1" stop-color="#e21c1c"/></linearGradient><linearGradient id="gg" x1="0" y1="0" x2="0" y2="1"><stop offset="0" stop-color="#e4f39a"/><stop offset="0.45" stop-color="#c6e04a"/><stop offset="1" stop-color="#b2d030"/></linearGradient></defs><rect x="0" y="0" width="54" height="109" fill="#c8c8ca"/><rect x="0.5" y="0.5" width="53" height="108" fill="none" stroke="#a9a9ab" stroke-width="1"/><rect x="3.3" y="2.2" width="48.8" height="18.7" rx="2" fill="url(#gp)" stroke="#fff" stroke-opacity="0.85" stroke-width="0.9"/><text x="27.7" y="14.2" fill="#fff" font-family="Liberation Sans" font-weight="bold" font-size="5.5" text-anchor="middle">Topic</text><line x1="27.7" y1="23.2" x2="27.7" y2="30.2" stroke="#fff" stroke-width="0.9"/><path d="M26.2 28.2 L27.7 30.7 L29.2 28.2" fill="#fff"/><rect x="3.3" y="30.6" width="48.8" height="18.7" rx="2" fill="url(#gk)" stroke="#fff" stroke-opacity="0.85" stroke-width="0.9"/><text x="27.7" y="42.6" fill="#fff" font-family="Liberation Sans" font-weight="bold" font-size="5.5" text-anchor="middle">Topic</text><line x1="27.7" y1="51.6" x2="27.7" y2="58.6" stroke="#fff" stroke-width="0.9"/><path d="M26.2 56.6 L27.7 59.1 L29.2 56.6" fill="#fff"/><rect x="3.3" y="58.8" width="48.8" height="18.7" rx="2" fill="url(#gr)" stroke="#fff" stroke-opacity="0.85" stroke-width="0.9"/><text x="27.7" y="70.8" fill="#fff" font-family="Liberation Sans" font-weight="bold" font-size="5.5" text-anchor="middle">Topic</text><line x1="27.7" y1="79.8" x2="27.7" y2="86.8" stroke="#fff" stroke-width="0.9"/><path d="M26.2 84.8 L27.7 87.3 L29.2 84.8" fill="#fff"/><rect x="3.3" y="87.5" width="48.8" height="18.7" rx="2" fill="url(#gg)" stroke="#fff" stroke-opacity="0.85" stroke-width="0.9"/><text x="27.7" y="99.5" fill="#fff" font-family="Liberation Sans" font-weight="bold" font-size="5.5" text-anchor="middle">Topic</text></svg>
<svg style="left:346.3px;top:315.6px;box-shadow:0 0.5px 2px rgba(0,0,0,0.3)" width="98.1" height="110" viewBox="0 0 98 110" preserveAspectRatio="none"><rect x="0" y="0" width="98" height="110" fill="#ebdf5c"/><line x1="48.9" y1="55" x2="48.9" y2="9.2" stroke="#d8cc58" stroke-width="0.6"/><line x1="48.9" y1="55" x2="48.9" y2="32.2" stroke="#d8cc58" stroke-width="0.6"/><line x1="48.9" y1="55" x2="9.9" y2="32.2" stroke="#d8cc58" stroke-width="0.6"/><line x1="48.9" y1="55" x2="88.4" y2="32.2" stroke="#d8cc58" stroke-width="0.6"/><line x1="48.9" y1="55" x2="29.2" y2="43.4" stroke="#d8cc58" stroke-width="0.6"/><line x1="48.9" y1="55" x2="68.7" y2="43.4" stroke="#d8cc58" stroke-width="0.6"/><line x1="48.9" y1="55" x2="29.2" y2="66.3" stroke="#d8cc58" stroke-width="0.6"/><line x1="48.9" y1="55" x2="68.7" y2="66.3" stroke="#d8cc58" stroke-width="0.6"/><line x1="48.9" y1="55" x2="9.9" y2="77.6" stroke="#d8cc58" stroke-width="0.6"/><line x1="48.9" y1="55" x2="48.9" y2="77.6" stroke="#d8cc58" stroke-width="0.6"/><line x1="48.9" y1="55" x2="88.4" y2="77.6" stroke="#d8cc58" stroke-width="0.6"/><line x1="48.9" y1="55" x2="48.9" y2="100.1" stroke="#d8cc58" stroke-width="0.6"/><circle cx="48.9" cy="55" r="10.6" fill="#9b9a98"/><text x="48.9" y="56.5" fill="#eee" font-family="Liberation Sans" font-size="4" text-anchor="middle">Topic</text><circle cx="48.9" cy="9.2" r="6.6" fill="#c9efd6" stroke="#fff" stroke-opacity="0.5" stroke-width="0.5"/><text x="48.9" y="10.399999999999999" fill="#777" font-family="Liberation Sans" font-size="3.4" text-anchor="middle">Topic</text><circle cx="48.9" cy="32.2" r="6.6" fill="#c3e6f7" stroke="#fff" stroke-opacity="0.5" stroke-width="0.5"/><text x="48.9" y="33.400000000000006" fill="#777" font-family="Liberation Sans" font-size="3.4" text-anchor="middle">Topic</text><circle cx="9.9" cy="32.2" r="6.6" fill="#c8f0cc" stroke="#fff" stroke-opacity="0.5" stroke-width="0.5"/><text x="9.9" y="33.400000000000006" fill="#777" font-family="Liberation Sans" font-size="3.4" text-anchor="middle">Topic</text><circle cx="88.4" cy="32.2" r="6.6" fill="#dccbe0" stroke="#fff" stroke-opacity="0.5" stroke-width="0.5"/><text x="88.4" y="33.400000000000006" fill="#777" font-family="Liberation Sans" font-size="3.4" text-anchor="middle">Topic</text><circle cx="29.2" cy="43.4" r="6.6" fill="#c2f0dc" stroke="#fff" stroke-opacity="0.5" stroke-width="0.5"/><text x="29.2" y="44.6" fill="#777" font-family="Liberation Sans" font-size="3.4" text-anchor="middle">Topic</text><circle cx="68.7" cy="43.4" r="6.6" fill="#d6cbf6" stroke="#fff" stroke-opacity="0.5" stroke-width="0.5"/><text x="68.7" y="44.6" fill="#777" font-family="Liberation Sans" font-size="3.4" text-anchor="middle">Topic</text><circle cx="29.2" cy="66.3" r="6.6" fill="#ebf4c2" stroke="#fff" stroke-opacity="0.5" stroke-width="0.5"/><text x="29.2" y="67.5" fill="#777" font-family="Liberation Sans" font-size="3.4" text-anchor="middle">Topic</text><circle cx="68.7" cy="66.3" r="6.6" fill="#f1b9ef" stroke="#fff" stroke-opacity="0.5" stroke-width="0.5"/><text x="68.7" y="67.5" fill="#777" font-family="Liberation Sans" font-size="3.4" text-anchor="middle">Topic</text><circle cx="9.9" cy="77.6" r="6.6" fill="#e3f1c4" stroke="#fff" stroke-opacity="0.5" stroke-width="0.5"/><text x="9.9" y="78.8" fill="#777" font-family="Liberation Sans" font-size="3.4" text-anchor="middle">Topic</text><circle cx="48.9" cy="77.6" r="6.6" fill="#f7d7bc" stroke="#fff" stroke-opacity="0.5" stroke-width="0.5"/><text x="48.9" y="78.8" fill="#777" font-family="Liberation Sans" font-size="3.4" text-anchor="middle">Topic</text><circle cx="88.4" cy="77.6" r="6.6" fill="#f0c9d2" stroke="#fff" stroke-opacity="0.5" stroke-width="0.5"/><text x="88.4" y="78.8" fill="#777" font-family="Liberation Sans" font-size="3.4" text-anchor="middle">Topic</text><circle cx="48.9" cy="100.1" r="6.6" fill="#f7d8b6" stroke="#fff" stroke-opacity="0.5" stroke-width="0.5"/><text x="48.9" y="101.3" fill="#777" font-family="Liberation Sans" font-size="3.4" text-anchor="middle">Topic</text></svg>
<svg style="left:642.1px;top:320.5px;" width="110" height="104.6" viewBox="0 0 110 104.6" preserveAspectRatio="none"><defs><linearGradient id="sky" x1="0" y1="0" x2="0" y2="1"><stop offset="0" stop-color="#c4ebfb"/><stop offset="0.55" stop-color="#8edcf7"/><stop offset="1" stop-color="#a6e0f8"/></linearGradient></defs><rect x="0" y="0" width="110" height="104.6" fill="url(#sky)"/><rect x="46.00" y="3.30" width="13.6" height="9" rx="2.70" fill="#eef1f6"/><circle cx="49.13" cy="3.98" r="1.98" fill="#eef1f6"/><circle cx="53.41" cy="3.82" r="1.80" fill="#eef1f6"/><circle cx="56.72" cy="4.36" r="1.62" fill="#eef1f6"/><circle cx="46.68" cy="7.80" r="1.80" fill="#eef1f6"/><circle cx="58.92" cy="8.18" r="1.80" fill="#eef1f6"/><circle cx="49.74" cy="11.62" r="1.80" fill="#eef1f6"/><circle cx="55.25" cy="11.78" r="1.80" fill="#eef1f6"/><text x="52.8" y="8.9" fill="#9a9ea6" font-family="Liberation Sans" font-weight="bold" font-size="2.88" text-anchor="middle">Topic</text><rect x="22.10" y="12.10" width="13" height="9" rx="2.70" fill="#eef1f6"/><circle cx="25.09" cy="12.78" r="1.98" fill="#eef1f6"/><circle cx="29.19" cy="12.62" r="1.80" fill="#eef1f6"/><circle cx="32.34" cy="13.16" r="1.62" fill="#eef1f6"/><circle cx="22.75" cy="16.60" r="1.80" fill="#eef1f6"/><circle cx="34.45" cy="16.98" r="1.80" fill="#eef1f6"/><circle cx="25.68" cy="20.43" r="1.80" fill="#eef1f6"/><circle cx="30.94" cy="20.58" r="1.80" fill="#eef1f6"/><text x="28.6" y="17.700000000000003" fill="#9a9ea6" font-family="Liberation Sans" font-weight="bold" font-size="2.88" text-anchor="middle">Topic</text><rect x="39.00" y="24.10" width="16" height="11" rx="3.30" fill="#eef1f6"/><circle cx="42.68" cy="24.93" r="2.42" fill="#eef1f6"/><circle cx="47.72" cy="24.74" r="2.20" fill="#eef1f6"/><circle cx="51.61" cy="25.39" r="1.98" fill="#eef1f6"/><circle cx="39.80" cy="29.60" r="2.20" fill="#eef1f6"/><circle cx="54.20" cy="30.07" r="2.20" fill="#eef1f6"/><circle cx="43.40" cy="34.27" r="2.20" fill="#eef1f6"/><circle cx="49.88" cy="34.46" r="2.20" fill="#eef1f6"/><text x="47" y="30.700000000000003" fill="#9a9ea6" font-family="Liberation Sans" font-weight="bold" font-size="3.52" text-anchor="middle">Topic</text><rect x="84.80" y="21.40" width="13" height="9" rx="2.70" fill="#eef1f6"/><circle cx="87.79" cy="22.07" r="1.98" fill="#eef1f6"/><circle cx="91.88" cy="21.92" r="1.80" fill="#eef1f6"/><circle cx="95.04" cy="22.46" r="1.62" fill="#eef1f6"/><circle cx="85.45" cy="25.90" r="1.80" fill="#eef1f6"/><circle cx="97.15" cy="26.28" r="1.80" fill="#eef1f6"/><circle cx="88.38" cy="29.72" r="1.80" fill="#eef1f6"/><circle cx="93.64" cy="29.88" r="1.80" fill="#eef1f6"/><text x="91.3" y="27.0" fill="#9a9ea6" font-family="Liberation Sans" font-weight="bold" font-size="2.88" text-anchor="middle">Topic</text><rect x="69.70" y="39.10" width="16" height="11" rx="3.30" fill="#eef1f6"/><circle cx="73.38" cy="39.93" r="2.42" fill="#eef1f6"/><circle cx="78.42" cy="39.74" r="2.20" fill="#eef1f6"/><circle cx="82.31" cy="40.39" r="1.98" fill="#eef1f6"/><circle cx="70.50" cy="44.60" r="2.20" fill="#eef1f6"/><circle cx="84.90" cy="45.07" r="2.20" fill="#eef1f6"/><circle cx="74.10" cy="49.27" r="2.20" fill="#eef1f6"/><circle cx="80.58" cy="49.46" r="2.20" fill="#eef1f6"/><text x="77.7" y="45.7" fill="#9a9ea6" font-family="Liberation Sans" font-weight="bold" font-size="3.52" text-anchor="middle">Topic</text><rect x="45.70" y="46.30" width="19" height="13" rx="3.90" fill="#eef1f6"/><circle cx="50.07" cy="47.27" r="2.86" fill="#eef1f6"/><circle cx="56.05" cy="47.05" r="2.60" fill="#eef1f6"/><circle cx="60.67" cy="47.83" r="2.34" fill="#eef1f6"/><circle cx="46.65" cy="52.80" r="2.60" fill="#eef1f6"/><circle cx="63.75" cy="53.35" r="2.60" fill="#eef1f6"/><circle cx="50.93" cy="58.32" r="2.60" fill="#eef1f6"/><circle cx="58.62" cy="58.55" r="2.60" fill="#eef1f6"/><text x="55.2" y="53.9" fill="#9a9ea6" font-family="Liberation Sans" font-weight="bold" font-size="4.16" text-anchor="middle">Topic</text><rect x="93.70" y="45.90" width="13" height="9" rx="2.70" fill="#eef1f6"/><circle cx="96.69" cy="46.57" r="1.98" fill="#eef1f6"/><circle cx="100.78" cy="46.42" r="1.80" fill="#eef1f6"/><circle cx="103.94" cy="46.96" r="1.62" fill="#eef1f6"/><circle cx="94.35" cy="50.40" r="1.80" fill="#eef1f6"/><circle cx="106.05" cy="50.78" r="1.80" fill="#eef1f6"/><circle cx="97.28" cy="54.23" r="1.80" fill="#eef1f6"/><circle cx="102.54" cy="54.38" r="1.80" fill="#eef1f6"/><text x="100.2" y="51.5" fill="#9a9ea6" font-family="Liberation Sans" font-weight="bold" font-size="2.88" text-anchor="middle">Topic</text><rect x="3.70" y="50.30" width="13" height="9" rx="2.70" fill="#eef1f6"/><circle cx="6.69" cy="50.97" r="1.98" fill="#eef1f6"/><circle cx="10.79" cy="50.82" r="1.80" fill="#eef1f6"/><circle cx="13.94" cy="51.36" r="1.62" fill="#eef1f6"/><circle cx="4.35" cy="54.80" r="1.80" fill="#eef1f6"/><circle cx="16.05" cy="55.18" r="1.80" fill="#eef1f6"/><circle cx="7.27" cy="58.62" r="1.80" fill="#eef1f6"/><circle cx="12.54" cy="58.78" r="1.80" fill="#eef1f6"/><text x="10.2" y="55.9" fill="#9a9ea6" font-family="Liberation Sans" font-weight="bold" font-size="2.88" text-anchor="middle">Topic</text><rect x="24.00" y="55.40" width="16" height="11" rx="3.30" fill="#eef1f6"/><circle cx="27.68" cy="56.23" r="2.42" fill="#eef1f6"/><circle cx="32.72" cy="56.04" r="2.20" fill="#eef1f6"/><circle cx="36.61" cy="56.69" r="1.98" fill="#eef1f6"/><circle cx="24.80" cy="60.90" r="2.20" fill="#eef1f6"/><circle cx="39.20" cy="61.37" r="2.20" fill="#eef1f6"/><circle cx="28.40" cy="65.58" r="2.20" fill="#eef1f6"/><circle cx="34.88" cy="65.76" r="2.20" fill="#eef1f6"/><text x="32" y="62.0" fill="#9a9ea6" font-family="Liberation Sans" font-weight="bold" font-size="3.52" text-anchor="middle">Topic</text><rect x="55.40" y="69.70" width="16" height="11" rx="3.30" fill="#eef1f6"/><circle cx="59.08" cy="70.53" r="2.42" fill="#eef1f6"/><circle cx="64.12" cy="70.34" r="2.20" fill="#eef1f6"/><circle cx="68.01" cy="70.99" r="1.98" fill="#eef1f6"/><circle cx="56.20" cy="75.20" r="2.20" fill="#eef1f6"/><circle cx="70.60" cy="75.67" r="2.20" fill="#eef1f6"/><circle cx="59.80" cy="79.88" r="2.20" fill="#eef1f6"/><circle cx="66.28" cy="80.06" r="2.20" fill="#eef1f6"/><text x="63.4" y="76.3" fill="#9a9ea6" font-family="Liberation Sans" font-weight="bold" font-size="3.52" text-anchor="middle">Topic</text><rect x="12.60" y="74.50" width="13" height="9" rx="2.70" fill="#eef1f6"/><circle cx="15.59" cy="75.17" r="1.98" fill="#eef1f6"/><circle cx="19.69" cy="75.02" r="1.80" fill="#eef1f6"/><circle cx="22.84" cy="75.56" r="1.62" fill="#eef1f6"/><circle cx="13.25" cy="79.00" r="1.80" fill="#eef1f6"/><circle cx="24.95" cy="79.38" r="1.80" fill="#eef1f6"/><circle cx="16.18" cy="82.83" r="1.80" fill="#eef1f6"/><circle cx="21.44" cy="82.98" r="1.80" fill="#eef1f6"/><text x="19.1" y="80.1" fill="#9a9ea6" font-family="Liberation Sans" font-weight="bold" font-size="2.88" text-anchor="middle">Topic</text><rect x="75.30" y="84.40" width="13" height="9" rx="2.70" fill="#eef1f6"/><circle cx="78.29" cy="85.08" r="1.98" fill="#eef1f6"/><circle cx="82.38" cy="84.92" r="1.80" fill="#eef1f6"/><circle cx="85.54" cy="85.46" r="1.62" fill="#eef1f6"/><circle cx="75.95" cy="88.90" r="1.80" fill="#eef1f6"/><circle cx="87.65" cy="89.28" r="1.80" fill="#eef1f6"/><circle cx="78.88" cy="92.73" r="1.80" fill="#eef1f6"/><circle cx="84.14" cy="92.88" r="1.80" fill="#eef1f6"/><text x="81.8" y="90.0" fill="#9a9ea6" font-family="Liberation Sans" font-weight="bold" font-size="2.88" text-anchor="middle">Topic</text><rect x="50.80" y="93.20" width="13" height="9" rx="2.70" fill="#eef1f6"/><circle cx="53.79" cy="93.88" r="1.98" fill="#eef1f6"/><circle cx="57.88" cy="93.72" r="1.80" fill="#eef1f6"/><circle cx="61.04" cy="94.26" r="1.62" fill="#eef1f6"/><circle cx="51.45" cy="97.70" r="1.80" fill="#eef1f6"/><circle cx="63.15" cy="98.08" r="1.80" fill="#eef1f6"/><circle cx="54.38" cy="101.53" r="1.80" fill="#eef1f6"/><circle cx="59.64" cy="101.68" r="1.80" fill="#eef1f6"/><text x="57.3" y="98.8" fill="#9a9ea6" font-family="Liberation Sans" font-weight="bold" font-size="2.88" text-anchor="middle">Topic</text></svg>
<svg style="left:346.9px;top:585.6px;box-shadow:0 0 0 0.6px rgba(0,0,0,0.25),0 0.5px 2px rgba(0,0,0,0.35)" width="109" height="39.5" viewBox="0 0 109 39.5" preserveAspectRatio="none"><rect x="0" y="0" width="109" height="39.5" fill="#fdf5e4"/><rect x="38.5" y="2.875" width="32.125" height="11.75" fill="#5c6873"/><path d="M54.75 14.625 V20.375 M18.75 25.0 V20.375 H91.25 V25.0" fill="none" stroke="#666" stroke-width="0.7"/><rect x="2.125" y="25.0" width="32.5" height="12.125" fill="#b88c24"/><text x="18.375" y="30.0" fill="#f4f0e0" font-family="Liberation Sans" font-weight="bold" font-size="2.6" text-anchor="middle">TITLE</text><text x="18.375" y="35.0" fill="#f4f0e0" font-family="Liberation Sans" font-size="2.3" text-anchor="middle">Name</text><rect x="38.375" y="25.0" width="32.25" height="12.125" fill="#6f74c4"/><text x="54.5" y="30.0" fill="#f4f0e0" font-family="Liberation Sans" font-weight="bold" font-size="2.6" text-anchor="middle">TITLE</text><text x="54.5" y="35.0" fill="#f4f0e0" font-family="Liberation Sans" font-size="2.3" text-anchor="middle">Name</text><rect x="74.625" y="25.0" width="32.25" height="12.125" fill="#d8343a"/><text x="90.75" y="30.0" fill="#f4f0e0" font-family="Liberation Sans" font-weight="bold" font-size="2.6" text-anchor="middle">TITLE</text><text x="90.75" y="35.0" fill="#f4f0e0" font-family="Liberation Sans" font-size="2.3" text-anchor="middle">Name</text><text x="54.75" y="7.125" fill="#eee" font-family="Liberation Sans" font-weight="bold" font-size="2.6" text-anchor="middle">TITLE</text><text x="54.75" y="12.125" fill="#ddd" font-family="Liberation Sans" font-size="2.3" text-anchor="middle">Name</text></svg>
<svg style="left:642.9px;top:578.5px;box-shadow:0 0 0 0.8px rgba(255,255,255,0.8)" width="109" height="46.25" viewBox="0 0 109 46" preserveAspectRatio="none"><defs><radialGradient id="chk" cx="0.5" cy="0.45" r="0.7"><stop offset="0" stop-color="#555"/><stop offset="1" stop-color="#3e3e3e"/></radialGradient></defs><rect x="0" y="0" width="109" height="46" fill="url(#chk)"/><text x="5.25" y="12.125" fill="#dcdcdc" font-family="Liberation Mono" font-weight="bold" font-size="5.8">Topic 1</text><text x="78.375" y="12.125" fill="#dcdcdc" font-family="Liberation Mono" font-weight="bold" font-size="5.8">Topic 2</text><text x="5.25" y="40.875" fill="#dcdcdc" font-family="Liberation Mono" font-weight="bold" font-size="5.8">Topic 3</text><text x="77.75" y="40.875" fill="#dcdcdc" font-family="Liberation Mono" font-weight="bold" font-size="5.8">Topic 4</text><text x="36.875" y="26.75" fill="#dcdcdc" font-family="Liberation Mono" font-weight="bold" font-size="5.8" font-size="4.8">Main Idea</text><line x1="30.25" y1="13.75" x2="40.25" y2="17.75" stroke="#ccc" stroke-width="0.9"/><line x1="69.0" y1="17.75" x2="77.125" y2="14.25" stroke="#ccc" stroke-width="0.9"/><line x1="30.875" y1="33.0" x2="39.0" y2="29.25" stroke="#ccc" stroke-width="0.9"/><line x1="69.625" y1="29.25" x2="77.125" y2="33.0" stroke="#ccc" stroke-width="0.9"/></svg>
<div class="t" style="left:301.40px;width:200px;text-align:center;top:236.90px;font-size:16px;color:#111;transform:scale(1.04,0.97);transform-origin:50% 13.60px;-webkit-text-stroke:0.17px currentColor;">Lines</div>
<div class="t" style="left:597.30px;width:200px;text-align:center;top:236.70px;font-size:16px;color:#111;transform:scale(1.04,0.97);transform-origin:50% 13.60px;-webkit-text-stroke:0.17px currentColor;">Org Chart</div>
<div class="t" style="left:301.40px;width:200px;text-align:center;top:436.20px;font-size:16px;color:#111;transform:scale(1.04,0.97);transform-origin:50% 13.60px;-webkit-text-stroke:0.17px currentColor;">Circles</div>
<div class="t" style="left:597.30px;width:200px;text-align:center;top:436.20px;font-size:16px;color:#111;transform:scale(1.04,0.97);transform-origin:50% 13.60px;-webkit-text-stroke:0.17px currentColor;">Clouds</div>
<div class="t" style="left:301.20px;width:200px;text-align:center;top:635.80px;font-size:16px;color:#111;transform:scale(1.04,0.97);transform-origin:50% 13.60px;-webkit-text-stroke:0.17px currentColor;">Org Chart plain</div>
<div class="t" style="left:597.20px;width:200px;text-align:center;top:635.80px;font-size:16px;color:#111;transform:scale(1.04,0.97);transform-origin:50% 13.60px;-webkit-text-stroke:0.17px currentColor;">Chalkboard</div>
<div class="t" style="left:820.00px;top:295.50px;font-size:16px;color:#7c7c7c;transform:scale(1.04,0.9);transform-origin:0 13.60px;">Lines</div>
<div class="t" style="right:302.00px;top:323.95px;font-size:13px;color:#4d4d4d;font-weight:bold;">Auto-layout</div>
<div class="t" style="left:908.50px;top:323.95px;font-size:13px;color:#505050;transform:scale(1.05,1.0);transform-origin:0 11.05px;-webkit-text-stroke:0.1px currentColor;">On</div>
<div class="t" style="right:302.00px;top:349.75px;font-size:13px;color:#4d4d4d;font-weight:bold;">Size</div>
<div class="t" style="left:908.50px;top:349.75px;font-size:13px;color:#505050;transform:scale(1.05,1.0);transform-origin:0 11.05px;-webkit-text-stroke:0.1px currentColor;">Auto</div>
<div class="t" style="right:302.00px;top:375.55px;font-size:13px;color:#4d4d4d;font-weight:bold;">Units</div>
<div class="t" style="left:908.50px;top:375.55px;font-size:13px;color:#505050;transform:scale(1.05,1.0);transform-origin:0 11.05px;-webkit-text-stroke:0.1px currentColor;">points (pt)</div>
<div class="t" style="right:302.00px;top:401.25px;font-size:13px;color:#4d4d4d;font-weight:bold;">Snap to Grid</div>
<div class="t" style="left:908.50px;top:401.25px;font-size:13px;color:#505050;transform:scale(1.05,1.0);transform-origin:0 11.05px;-webkit-text-stroke:0.1px currentColor;">Off</div>
<div class="a" style="left:892.5px;top:655px;width:151px;height:22px;box-sizing:border-box;border:1px solid #a9a9a9;border-radius:5px;background:linear-gradient(#f2f2f2,#e9e9e9);"></div>
<div class="t" style="left:888.00px;width:160px;text-align:center;top:658.40px;font-size:16px;color:#242424;transform:scale(0.965,0.9);transform-origin:50% 13.60px;-webkit-text-stroke:0.12px currentColor;">Set as Default</div>
<div class="a" style="left:84.1px;top:720.4px;width:24.3px;height:24.3px;border-radius:50%;background:#fff;box-sizing:border-box;box-shadow:0 0 0 0.6px rgba(0,0,0,0.22),0 1px 1px rgba(0,0,0,0.15);"></div>
<div class="t" style="left:81.30px;width:30px;text-align:center;top:724.60px;font-size:18px;color:#1f74d8;transform:scale(0.86,1.0);transform-origin:50% 15.30px;-webkit-text-stroke:0.4px currentColor;">?</div>
<div class="btn" style="left:229.8px;top:720.5px;width:59.4px;height:23.6px;"></div>
<svg style="left:242px;top:722px" width="24" height="22" viewBox="0 0 24 22"><path d="M1.9 17.6 V4.0 Q1.9 2.8 3.1 2.8 H6.2 Q7.0 2.8 7.6 3.5 L8.4 4.4 Q8.9 5.0 9.7 5.0 H19.7 Q20.8 5.0 20.8 6.1 V17.6 Q20.8 18.7 19.7 18.7 H3.0 Q1.9 18.7 1.9 17.6 Z" fill="#f6f6f6" stroke="#383838" stroke-width="1.45"/><path d="M4.4 12.6 Q2.6 10.6 5.2 8.9 Q8.2 7.4 12.0 8.0 Q15.2 8.8 14.6 10.8 Q13.8 12.6 11.4 12.4 Q9.6 12.0 10.4 10.8" fill="none" stroke="#383838" stroke-width="1.45" stroke-linecap="round"/><path d="M15.2 10.0 Q17.8 11.4 16.4 13.6 Q14.6 15.4 11.2 15.3 Q7.6 15.0 7.2 13.2 Q7.2 11.4 9.4 10.8" fill="none" stroke="#383838" stroke-width="1.45" stroke-linecap="round"/></svg>
<svg style="left:0;top:0" width="1200" height="851"><path d="M267.2 733.7 H275.6 M271.4 729.5 V737.9" stroke="#333" stroke-width="1.5"/></svg>
<div class="btn" style="left:867.5px;top:720.5px;width:84px;height:24.5px;"></div>
<div class="t" style="left:867.40px;width:84px;text-align:center;top:725.00px;font-size:16px;color:#202020;transform:scale(1.04,0.94);transform-origin:50% 13.60px;-webkit-text-stroke:0.1px currentColor;">Cancel</div>
<div class="a" style="left:968px;top:720px;width:148px;height:25px;border-radius:4.5px;background:linear-gradient(#66acf9,#3f95f7 50%,#2184f5);box-shadow:inset 0 0 0 0.6px rgba(20,100,210,0.55),0 0 0 0.6px rgba(255,255,255,0.6);"></div>
<div class="t" style="left:967.50px;width:148px;text-align:center;top:724.60px;font-size:16px;color:#fff;transform:scale(1.045,0.94);transform-origin:50% 13.60px;">New Document</div>
</body></html>
